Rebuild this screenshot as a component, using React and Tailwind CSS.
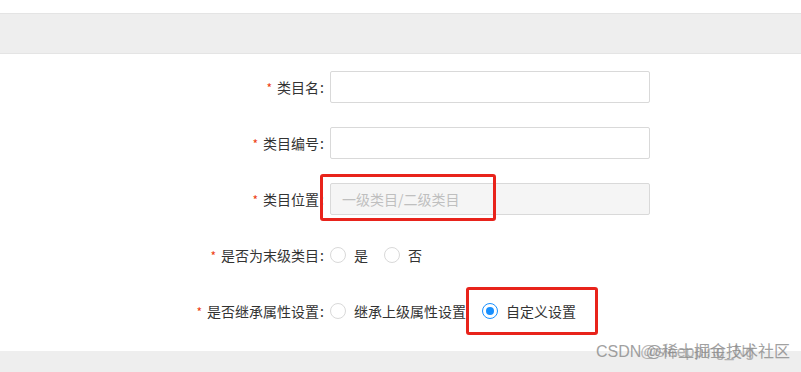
import React from 'react';

const font = { fontFamily: '"Noto Sans CJK SC", "Noto Sans", sans-serif' };

// label column with red asterisk
const Label = ({ children }) => (
  <div className='w-[324px] shrink-0 text-right text-[14px] text-[#333] leading-none'>
    <span className='text-[#ed4014] mr-[5px] text-[12px]'>*</span>
    {children}<span className='ml-[1px]'>:</span>
  </div>
);

const Radio = ({ checked, label }) => (
  <label className='flex items-center mr-[16px]'>
    <span
      className={
        checked
          ? 'w-[16px] h-[16px] rounded-full border border-[#1890ff] flex items-center justify-center bg-white'
          : 'w-[16px] h-[16px] rounded-full border border-[#d9d9d9] bg-white'
      }
    >
      {checked && <span className='w-[8px] h-[8px] rounded-full bg-[#1890ff]' />}
    </span>
    <span className='ml-[8px] text-[14px] text-[#333] leading-none'>{label}</span>
  </label>
);

export default function App() {
  return (
    <div className='relative w-[801px] h-[372px] bg-white overflow-hidden' style={font}>
      <div className='h-[13px]' />
      <div className='h-[41px] bg-[#eeeeee] border-t border-b border-[#e4e4e4]' />

      <div className='flex flex-col gap-[24px] pt-[17px]'>
        <div className='flex items-center h-[32px]'>
          <Label>类目名</Label>
          <input className='ml-[6px] w-[320px] h-[32px] border border-[#d9d9d9] rounded-[2px] bg-white' />
        </div>
        <div className='flex items-center h-[32px]'>
          <Label>类目编号</Label>
          <input className='ml-[6px] w-[320px] h-[32px] border border-[#d9d9d9] rounded-[2px] bg-white' />
        </div>
        <div className='flex items-center h-[32px]'>
          <Label>类目位置</Label>
          <div className='ml-[6px] w-[320px] h-[32px] border border-[#d9d9d9] rounded-[2px] bg-[#f5f5f5] flex items-center px-[11px] text-[14px] text-[#bfbfbf]'>
            一级类目/二级类目
          </div>
        </div>
        <div className='flex items-center h-[32px]'>
          <Label>是否为末级类目</Label>
          <div className='ml-[6px] flex items-center'>
            <Radio label='是' />
            <Radio label='否' />
          </div>
        </div>
        <div className='flex items-center h-[32px]'>
          <Label>是否继承属性设置</Label>
          <div className='ml-[6px] flex items-center'>
            <Radio label='继承上级属性设置' />
            <Radio checked label='自定义设置' />
          </div>
        </div>
      </div>

      <div className='absolute left-0 right-0 top-[351px] bottom-0 bg-[#eeeeee]' />

      {/* red annotation boxes */}
      <div className='absolute left-[320px] top-[174px] w-[176px] h-[47px] border-[3px] border-[#e8231b] rounded-[3px]' />
      <div className='absolute left-[466px] top-[287px] w-[132px] h-[48px] border-[3px] border-[#e8231b] rounded-[3px]' />

      {/* watermark */}
      <div className='absolute left-[596px] top-[340px] text-[16px] text-[#8a8a8a] opacity-80 whitespace-nowrap' style={{ fontFamily: '"Liberation Sans", "Noto Sans CJK SC", sans-serif' }}>
        CSDN @稀土掘金技术社区
      </div>
      <div className='absolute left-[640px] top-[340px] text-[16px] text-[#8a8a8a] opacity-60 whitespace-nowrap' style={{ fontFamily: '"Liberation Sans", sans-serif' }}>
        @sleepping_Ng
      </div>
    </div>
  );
}
